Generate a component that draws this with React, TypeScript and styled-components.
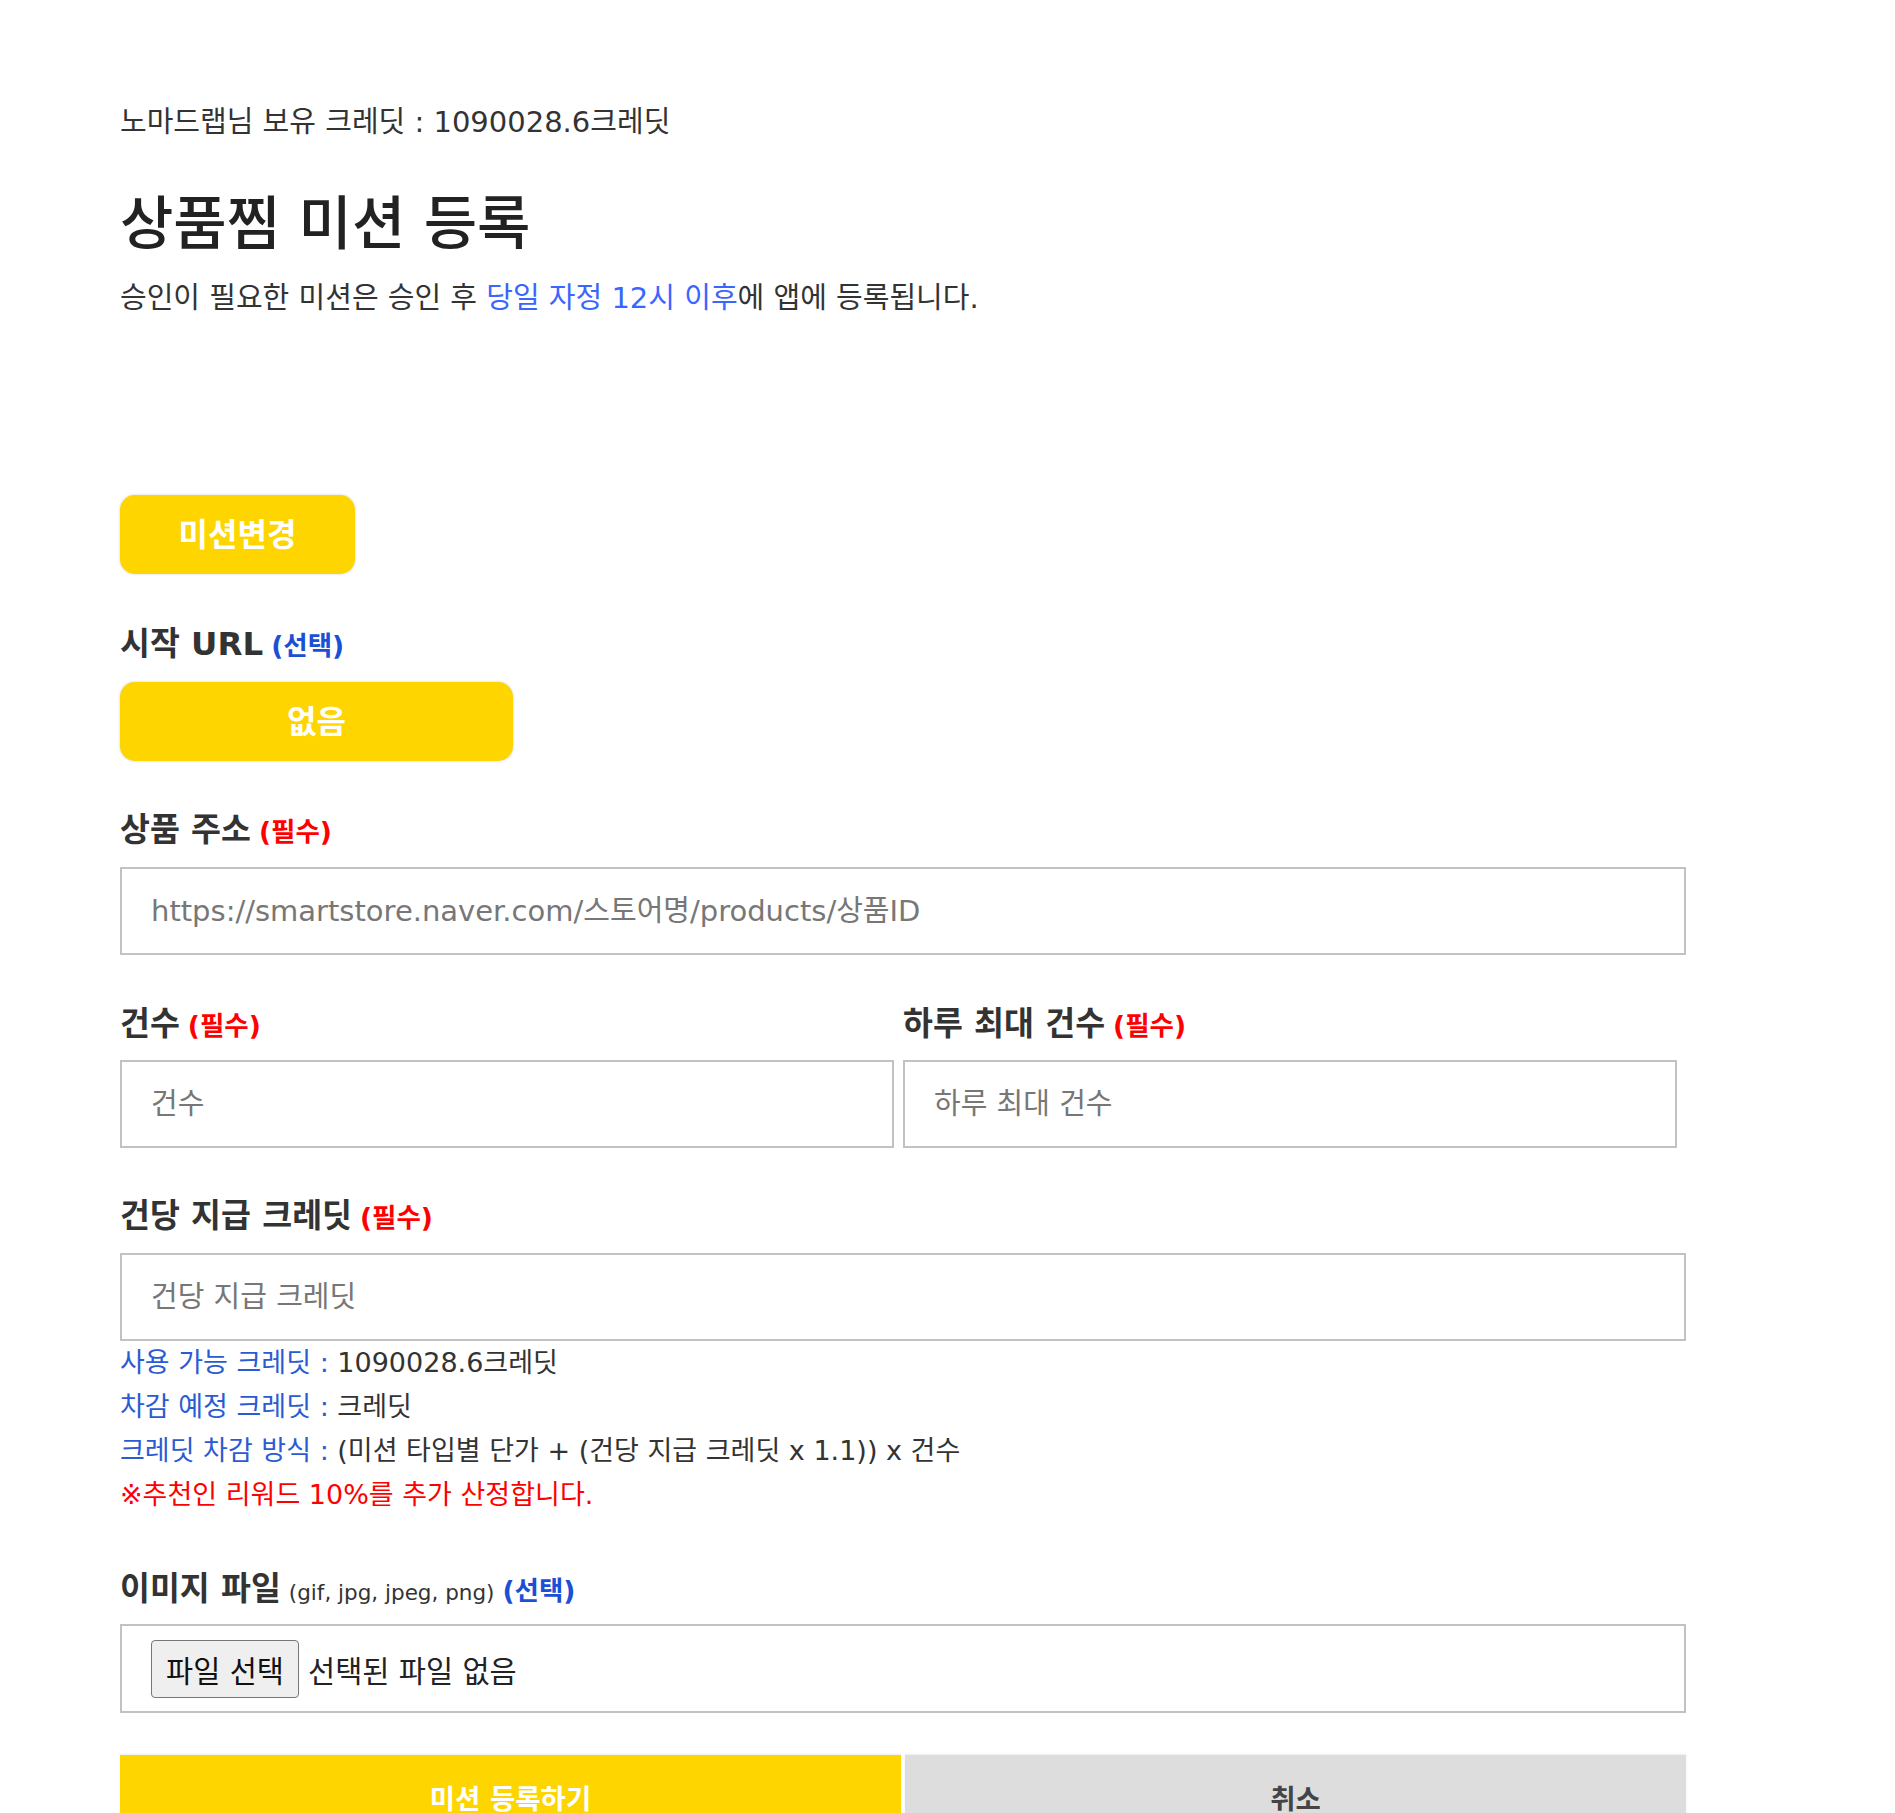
import React from "react";
import styled, { createGlobalStyle } from "styled-components";

const GlobalStyle = createGlobalStyle`
  html, body {
    margin: 0;
    padding: 0;
    background: #ffffff;
  }
  body {
    font-family: "DejaVu Sans", "Noto Sans CJK KR", sans-serif;
    color: #333333;
  }
  * { box-sizing: border-box; }
`;

const Page = styled.main`
  display: flex;
  flex-direction: column;
  align-items: flex-start;
  width: 1566px;
  padding: 102px 0 40px 120px;
  box-sizing: content-box;
`;

const CreditLine = styled.p`
  margin: 0;
  height: 40px;
  font-size: 29px;
  line-height: 40px;
  color: #333333;
  white-space: nowrap;
`;

const Title = styled.h1`
  margin: 50px 0 0;
  height: 64px;
  font-size: 58px;
  line-height: 64px;
  font-weight: 500;
  color: #222222;
  white-space: nowrap;
`;

const Notice = styled.p`
  margin: 22px 0 0;
  height: 40px;
  font-size: 29px;
  line-height: 40px;
  color: #333333;
  white-space: nowrap;
`;

const Highlight = styled.span`
  color: #3a66ff;
`;

const PillButton = styled.button<{ $width: number; $mt: number }>`
  margin-top: ${(p) => p.$mt}px;
  width: ${(p) => p.$width}px;
  height: 79px;
  padding: 0;
  border: none;
  border-radius: 15px;
  background: #ffd500;
  box-shadow: 0 0 3px rgba(0, 0, 0, 0.18);
  color: #ffffff;
  font-family: inherit;
  font-size: 32px;
  font-weight: 700;
  line-height: 1;
  cursor: pointer;
`;

const FieldLabel = styled.div<{ $mt: number }>`
  margin-top: ${(p) => p.$mt}px;
  height: 40px;
  font-size: 32.5px;
  line-height: 40px;
  font-weight: 700;
  color: #333333;
  white-space: nowrap;
`;

const LabelTag = styled.span<{ $tone: "red" | "blue" }>`
  margin-left: 8px;
  font-size: 26.5px;
  line-height: 1;
  font-weight: 700;
  color: ${(p) => (p.$tone === "red" ? "#ff0000" : "#1a4fd6")};
`;

const SubNote = styled.span`
  margin-left: 8px;
  font-size: 21.5px;
  line-height: 1;
  font-weight: 400;
  color: #333333;
`;

const TextInput = styled.input<{ $mt: number }>`
  display: block;
  margin-top: ${(p) => p.$mt}px;
  width: 100%;
  height: 88px;
  padding: 0 29px;
  border: 2px solid #c2c2c2;
  border-radius: 0;
  background: #ffffff;
  font-family: inherit;
  font-size: 29px;
  color: #333333;
  outline: none;

  &::placeholder {
    color: #777777;
  }
`;

const FullWidth = styled.div`
  width: 100%;
`;

const TwoCol = styled.div<{ $mt: number }>`
  margin-top: ${(p) => p.$mt}px;
  width: 100%;
  display: grid;
  grid-template-columns: 1fr 1fr;
`;

const Column = styled.div`
  display: flex;
  flex-direction: column;

  & > input {
    width: calc(100% - 9px);
  }
`;

const InfoList = styled.div`
  display: flex;
  flex-direction: column;
`;

const InfoLine = styled.p<{ $red?: boolean }>`
  margin: 0;
  height: 44px;
  font-size: 27px;
  line-height: 44px;
  color: ${(p) => (p.$red ? "#ff0000" : "#333333")};
  white-space: nowrap;
`;

const InfoKey = styled.span`
  color: #2b5bd3;
`;

const FileBox = styled.div`
  margin-top: 15px;
  width: 100%;
  height: 89px;
  display: flex;
  align-items: center;
  padding-left: 29px;
  border: 2px solid #c2c2c2;
  background: #ffffff;
`;

const FileButton = styled.button`
  width: 148px;
  height: 58px;
  margin-right: 9px;
  padding: 0;
  border: 1px solid #767676;
  border-radius: 4px;
  background: #efefef;
  font-family: inherit;
  font-size: 29.5px;
  color: #111111;
  cursor: pointer;
`;

const FileStatus = styled.span`
  font-size: 29.5px;
  color: #222222;
`;

const ActionRow = styled.div`
  margin-top: 42px;
  width: 100%;
  display: grid;
  grid-template-columns: 1fr 1fr;
  gap: 4px;
`;

const ActionButton = styled.button<{ $variant: "primary" | "ghost" }>`
  height: 84px;
  padding: 0;
  border: none;
  box-shadow: 0 -1px 2px rgba(0, 0, 0, 0.08);
  background: ${(p) => (p.$variant === "primary" ? "#ffd500" : "#dddddd")};
  color: ${(p) => (p.$variant === "primary" ? "#ffffff" : "#444444")};
  font-family: inherit;
  font-size: 27.5px;
  font-weight: 700;
  cursor: pointer;
`;

export default function App() {
  return (
    <>
      <GlobalStyle />
      <Page>
        <CreditLine>노마드랩님 보유 크레딧 : 1090028.6크레딧</CreditLine>
        <Title>상품찜 미션 등록</Title>
        <Notice>
          승인이 필요한 미션은 승인 후 <Highlight>당일 자정 12시 이후</Highlight>에 앱에 등록됩니다.
        </Notice>

        <PillButton $width={235} $mt={177}>미션변경</PillButton>

        <FieldLabel $mt={50}>
          시작 URL<LabelTag $tone="blue">(선택)</LabelTag>
        </FieldLabel>
        <PillButton $width={393} $mt={18}>없음</PillButton>

        <FieldLabel $mt={49}>
          상품 주소<LabelTag $tone="red">(필수)</LabelTag>
        </FieldLabel>
        <FullWidth>
          <TextInput $mt={17} placeholder="https://smartstore.naver.com/스토어명/products/상품ID" />
        </FullWidth>

        <TwoCol $mt={49}>
          <Column>
            <FieldLabel $mt={0}>
              건수<LabelTag $tone="red">(필수)</LabelTag>
            </FieldLabel>
            <TextInput $mt={16} placeholder="건수" />
          </Column>
          <Column>
            <FieldLabel $mt={0}>
              하루 최대 건수<LabelTag $tone="red">(필수)</LabelTag>
            </FieldLabel>
            <TextInput $mt={16} placeholder="하루 최대 건수" />
          </Column>
        </TwoCol>

        <FieldLabel $mt={48}>
          건당 지급 크레딧<LabelTag $tone="red">(필수)</LabelTag>
        </FieldLabel>
        <FullWidth>
          <TextInput $mt={17} placeholder="건당 지급 크레딧" />
        </FullWidth>

        <InfoList>
          <InfoLine>
            <InfoKey>사용 가능 크레딧 :</InfoKey> 1090028.6크레딧
          </InfoLine>
          <InfoLine>
            <InfoKey>차감 예정 크레딧 :</InfoKey> 크레딧
          </InfoLine>
          <InfoLine>
            <InfoKey>크레딧 차감 방식 :</InfoKey> (미션 타입별 단가 + (건당 지급 크레딧 x 1.1)) x 건수
          </InfoLine>
          <InfoLine $red>※추천인 리워드 10%를 추가 산정합니다.</InfoLine>
        </InfoList>

        <FieldLabel $mt={52}>
          이미지 파일<SubNote>(gif, jpg, jpeg, png)</SubNote>
          <LabelTag $tone="blue">(선택)</LabelTag>
        </FieldLabel>
        <FileBox>
          <FileButton type="button">파일 선택</FileButton>
          <FileStatus>선택된 파일 없음</FileStatus>
        </FileBox>

        <ActionRow>
          <ActionButton $variant="primary">미션 등록하기</ActionButton>
          <ActionButton $variant="ghost">취소</ActionButton>
        </ActionRow>
      </Page>
    </>
  );
}
